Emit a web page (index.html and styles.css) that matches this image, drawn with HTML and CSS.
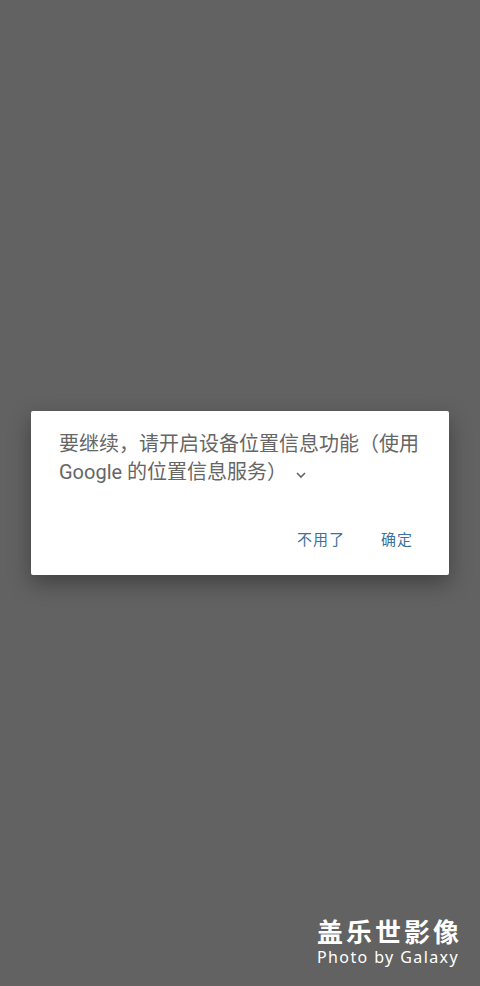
FILE: index.html
```html
<!DOCTYPE html>
<html lang="zh-CN">
<head>
  <meta charset="UTF-8" />
  <title>位置信息</title>
  <link rel="stylesheet" href="styles.css">
</head>
<body>
  <div class="screen">
    <div class="dialog">
      <p class="message">要继续，请开启设备位置信息功能（使用 Google 的位置信息服务）<svg class="chevron" width="12" height="8" viewBox="0 0 12 8"><path d="M2 2 L6 6 L10 2" fill="none" stroke="#666" stroke-width="1.6"/></svg></p>
      <div class="actions">
        <button class="btn">不用了</button>
        <button class="btn">确定</button>
      </div>
    </div>
    <div class="watermark">
      <div class="wm-title">盖乐世影像</div>
      <div class="wm-sub">Photo by Galaxy</div>
    </div>
  </div>
</body>
</html>
```

FILE: styles.css
```css
html, body { margin: 0; padding: 0; }
body { font-family: Roboto, "Noto Sans CJK SC", sans-serif; background: #626262; }
.screen { position: relative; width: 480px; height: 986px; display: flex; align-items: center; justify-content: center; }
.dialog { width: 418px; background: #fff; border-radius: 2px; box-shadow: 0 8px 22px rgba(0,0,0,0.35); padding: 19px 0 20px 0; box-sizing: border-box; height: 164px; display: flex; flex-direction: column; }
.message { margin: 0; padding: 0 20px 0 28px; font-size: 20px; line-height: 28px; color: #666; }
.chevron { margin-left: 8px; vertical-align: 0px; }
.actions { margin-top: auto; display: flex; justify-content: flex-end; gap: 20px; padding-right: 28px; }
.btn { border: none; background: none; font-family: inherit; font-size: 15px; color: #3d7398; padding: 6px 8px; letter-spacing: 1px; }
.watermark { position: absolute; right: 21px; bottom: 20px; color: #fff; text-align: center; }
.wm-title { font-size: 26px; font-weight: bold; letter-spacing: 3px; line-height: 28px; margin-right: -3px; }
.wm-sub { font-family: "Noto Sans", sans-serif; font-size: 16px; letter-spacing: 1.4px; line-height: 18px; margin-top: 1px; }
```
